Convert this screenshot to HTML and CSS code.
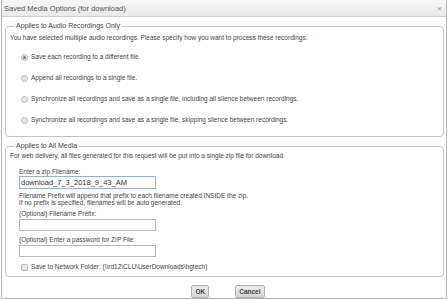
FILE: index.html
```html
<!DOCTYPE html>
<html lang="en">
<head>
  <meta charset="UTF-8" />
  <title>Saved Media Options</title>
  <link rel="stylesheet" href="styles.css">
</head>
<body>
  <div class="dialog">
    <div class="titlebar">
      <span class="title">Saved Media Options (for download)</span>
      <span class="close">&#x2715;</span>
    </div>

    <div class="content">
      <fieldset class="group audio">
        <legend>Applies to Audio Recordings Only</legend>
        <div class="intro">You have selected multiple audio recordings. Please specify how you want to process these recordings.</div>
        <label class="option first"><input type="radio" name="mode" checked /> Save each recording to a different file.</label>
        <label class="option"><input type="radio" name="mode" /> Append all recordings to a single file.</label>
        <label class="option"><input type="radio" name="mode" /> Synchronize all recordings and save as a single file, including all silence between recordings.</label>
        <label class="option"><input type="radio" name="mode" /> Synchronize all recordings and save as a single file, skipping silence between recordings.</label>
      </fieldset>

      <fieldset class="group media">
        <legend>Applies to All Media</legend>
        <div class="intro">For web delivery, all files generated for this request will be put into a single zip file for download.</div>
        <div class="field-label zip-label">Enter a zip Filename:</div>
        <input class="text big" type="text" value="download_7_3_2018_9_43_AM" />
        <div class="note">Filename Prefix will append that prefix to each filename created INSIDE the zip.<br>If no prefix is specified, filenames will be auto generated.</div>
        <div class="field-label prefix-label">(Optional) Filename Prefix:</div>
        <input class="text" type="text" />
        <div class="field-label pass-label">(Optional) Enter a password for ZIP File:</div>
        <input class="text" type="password" />
        <label class="option check"><input type="checkbox" /> Save to Network Folder: (\\rd12\CLU\UserDownloads\hgtech)</label>
      </fieldset>
    </div>

    <div class="buttons">
      <button class="btn ok">OK</button>
      <button class="btn cancel">Cancel</button>
    </div>
  </div>
</body>
</html>
```

FILE: styles.css
```css
body {
  margin: 0;
  font-family: 'Liberation Sans', Arial, sans-serif;
  background: #ffffff;
  color: #444;
}
.dialog {
  width: 446px;
  height: 299px;
  margin-left: 1px;
  border: 1px solid #b5b5b5;
  border-top: none;
  box-sizing: border-box;
  background: #fff;
}
.titlebar {
  height: 17px;
  display: flex;
  align-items: center;
  justify-content: space-between;
  padding: 0 4px 0 2px;
  background: linear-gradient(#f7f7f7, #e9e9e9);
  border-bottom: 1px solid #cfcfcf;
  box-sizing: border-box;
}
.title { font-size: 7.5px; color: #555; }
.close { font-size: 6px; color: #999; }
.content {
  padding: 5px 2px 0 3px;
}
.group {
  margin: 0;
  padding: 0 4px;
  border: 1px solid #c4c4c4;
  border-radius: 4px;
}
.group legend {
  font-size: 7px;
  line-height: 8px;
  padding: 0 2px;
  margin-left: 4px;
  color: #444;
}
.audio { padding-bottom: 12px; }
.media { margin-top: 5px; padding-bottom: 5px; }
.intro {
  font-size: 6.5px;
  line-height: 8px;
  margin-top: 4px;
}
.media .intro { margin-top: 2px; }
.option {
  display: flex;
  align-items: center;
  gap: 3px;
  font-size: 6.5px;
  line-height: 8px;
  margin: 13px 0 0 11px;
}
.option.first { margin-top: 11px; }
.option.check { margin-top: 6px; }
.option input {
  appearance: none;
  margin: 0;
  width: 7px;
  height: 7px;
  border: 1px solid #bdbdbd;
  background: #e6e6e6;
  box-sizing: border-box;
  border-radius: 50%;
  display: grid;
  place-items: center;
}
.option input[type=radio]:checked::after {
  content: "";
  width: 3px;
  height: 3px;
  border-radius: 50%;
  background: #7a7a7a;
}
.option input[type=checkbox] {
  border-radius: 1px;
}
.field-label {
  font-size: 6.5px;
  line-height: 8px;
  margin-left: 9px;
}
.zip-label { margin-top: 8px; }
.prefix-label { margin-top: 4px; }
.pass-label { margin-top: 5px; }
.text {
  display: block;
  width: 137px;
  height: 12px;
  margin: 1px 0 0 9px;
  padding: 0 1px;
  border: 1px solid #b9b9b9;
  box-sizing: border-box;
  font-family: inherit;
  font-size: 7px;
}
.text.big {
  height: 13px;
  margin-top: 0;
  font-size: 7.5px;
  color: #333;
  border-color: #8fb3df;
}
.note {
  font-size: 6.5px;
  line-height: 7px;
  margin: 3px 0 0 9px;
}
.buttons {
  display: flex;
  justify-content: center;
  gap: 26px;
  padding-top: 8px;
  padding-left: 8px;
}
.btn {
  height: 13px;
  padding: 0 3px;
  font-family: inherit;
  font-size: 6.5px;
  font-weight: bold;
  color: #444;
  background: linear-gradient(#ececec, #d4d4d4);
  border: 1px solid #b0b0b0;
  border-radius: 2px;
}
```
